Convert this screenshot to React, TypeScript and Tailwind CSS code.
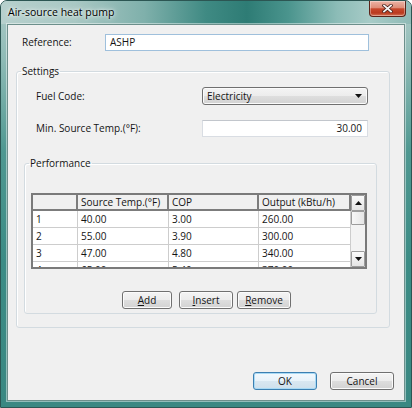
import React from "react";

const face =
  "h-[18px] items-center rounded-[3px] border border-[#707070] bg-[linear-gradient(180deg,#f4f4f4_0%,#ececec_50%,#dedede_50%,#d2d2d2_100%)] shadow-[inset_0_0_0_1px_#fbfbfb] leading-none";
const btn = `flex justify-center ${face}`;

function Up() {
  return (
    <svg width="7" height="4" viewBox="0 0 7 4">
      <path d="M0 4 L3.5 0 L7 4 Z" fill="#111" />
    </svg>
  );
}
function Down() {
  return (
    <svg width="7" height="4" viewBox="0 0 7 4">
      <path d="M0 0 L7 0 L3.5 4 Z" fill="#111" />
    </svg>
  );
}

const rows = [
  ["1", "40.00", "3.00", "260.00"],
  ["2", "55.00", "3.90", "300.00"],
  ["3", "47.00", "4.80", "340.00"],
  ["4", "65.00", "5.40", "370.00"],
];

export default function App() {
  return (
    <div className="h-[408px] w-[412px] font-['Open_Sans','Noto_Sans',sans-serif] text-[10px] text-[#141414]">
      <div className="flex h-full w-full flex-col overflow-hidden rounded-t-[7px] border border-[#2c5653] bg-[linear-gradient(180deg,#aecbc8_0px,#8dbab5_60px,#4f9891_150px,#3b8c85_260px,#3a8882_100%)]">
        {/* title bar */}
        <div className="flex h-[23px] shrink-0 items-start justify-between bg-[linear-gradient(90deg,#b7d0cd_0%,#a9c8c4_18%,#7fb0ab_35%,#3f8a83_50%,#2e7c75_60%,#4a948d_70%,#8cbcb7_82%,#a7cbc7_90%,#8fbab6_100%)]">
          <div className="pl-[7px] pt-[4px] text-[10.5px] leading-[15px] text-black [text-shadow:0_0_6px_rgba(255,255,255,0.95),0_0_3px_rgba(255,255,255,0.9)]">
            Air-source heat pump
          </div>
          <div className="mr-[5px] flex h-[16px] w-[37px] items-center justify-center rounded-b-[4px] border border-t-0 border-[#5b2319] bg-[linear-gradient(180deg,#ecb4a6_0%,#de8d78_45%,#c7482c_52%,#b93a1f_80%,#d67558_100%)] shadow-[inset_0_0_0_1px_rgba(255,255,255,0.35)]">
            <svg width="11" height="9" viewBox="0 0 11 9">
              <path d="M2 1.5 L9 7.5 M9 1.5 L2 7.5" stroke="#4a1f18" strokeWidth="3.4" strokeLinecap="square" />
              <path d="M2 1.5 L9 7.5 M9 1.5 L2 7.5" stroke="#f4f4f4" strokeWidth="1.8" strokeLinecap="square" />
            </svg>
          </div>
        </div>

        {/* body */}
        <div className="flex flex-1 px-[6px] pb-[6px]">
          <div className="flex flex-1 flex-col border border-[#6c8f8b] bg-[#f0f0f0] shadow-[0_0_0_1px_rgba(255,255,255,0.45)]">
            {/* Reference */}
            <div className="flex items-center pl-[14px] pt-[9px]">
              <span className="w-[83px]">Reference:</span>
              <div className="h-[17px] w-[264px] border border-[#9fc0dc] bg-white pl-[4px] leading-[15px]">
                ASHP
              </div>
            </div>

            {/* Settings */}
            <fieldset className="ml-[8px] mt-[13px] w-[374px] rounded-[3px] border border-[#d3dbe0] shadow-[inset_1px_1px_0_#fff]">
              <legend className="ml-[4px] px-[1px] leading-[14px]">Settings</legend>
              <div className="pb-[13px] pt-[9px]">
                <div className="flex items-center pl-[19px]">
                  <span className="w-[166px]">Fuel Code:</span>
                  <div className={`flex justify-between ${face} w-[166px] pl-[4px] pr-[5px]`}>
                    <span>Electricity</span>
                    <Down />
                  </div>
                </div>
                <div className="mt-[15px] flex items-center pl-[19px]">
                  <span className="w-[166px]">Min. Source Temp.(°F):</span>
                  <div className="h-[17px] w-[166px] border border-[#d9dde3] border-t-[#c2c6cc] bg-white pr-[5px] text-right leading-[15px]">
                    30.00
                  </div>
                </div>

                {/* Performance */}
                <fieldset className="ml-[7px] mt-[19px] w-[353px] rounded-[3px] border border-[#d3dbe0] shadow-[inset_1px_1px_0_#fff]">
                  <legend className="ml-[4px] px-[1px] leading-[14px]">Performance</legend>
                  <div className="pb-[4px] pl-[6px] pt-[23px]">
                    <div className="flex h-[76px] w-[336px] border-2 border-[#7a7a7a] bg-white">
                      <div className="grid h-[72px] w-[318px] grid-cols-[45px_91px_90px_92px] grid-rows-[16px_17px_17px_17px_17px] overflow-hidden">
                        <div className="border-b-2 border-r-2 border-[#7c7c7c] bg-[#f0f0f0]" />
                        {["Source Temp.(°F)", "COP", "Output (kBtu/h)"].map((h) => (
                          <div
                            key={h}
                            className="border-b-2 border-r-2 border-[#7c7c7c] bg-[#f0f0f0] pl-[3px] leading-[14px]"
                          >
                            {h}
                          </div>
                        ))}
                        {rows.map((r) =>
                          r.map((c, i) => (
                            <div
                              key={r[0] + "-" + i}
                              className="border-b border-r border-[#cdcdcd] bg-white pl-[3px] leading-[16px]"
                            >
                              {c}
                            </div>
                          ))
                        )}
                      </div>
                      {/* scrollbar */}
                      <div className="flex w-[14px] flex-col bg-[#f3f3f3]">
                        <div className="flex h-[16px] items-center justify-center rounded-[1px] border border-[#9c9c9c] bg-[linear-gradient(180deg,#fafafa,#e4e4e4)]">
                          <Up />
                        </div>
                        <div className="h-[14px] rounded-[1px] border border-[#9c9c9c] bg-[linear-gradient(90deg,#f7f7f7,#e6e6e6)]" />
                        <div className="flex-1" />
                        <div className="flex h-[16px] items-center justify-center rounded-[1px] border border-[#9c9c9c] bg-[linear-gradient(180deg,#fafafa,#e4e4e4)]">
                          <Down />
                        </div>
                      </div>
                    </div>

                    <div className="mt-[22px] flex pl-[91px]">
                      <div className={`${btn} w-[50px]`}>
                        <span>
                          <u>A</u>dd
                        </span>
                      </div>
                      <div className={`${btn} ml-[7px] w-[54px]`}>
                        <span>
                          <u>I</u>nsert
                        </span>
                      </div>
                      <div className={`${btn} ml-[4px] w-[54px]`}>
                        <span>
                          <u>R</u>emove
                        </span>
                      </div>
                    </div>
                  </div>
                </fieldset>
              </div>
            </fieldset>

            {/* OK / Cancel */}
            <div className="mt-auto flex justify-end gap-[13px] pb-[10px] pr-[10px]">
              <div className="flex h-[18px] w-[64px] items-center justify-center rounded-[3px] border border-[#3c7fb1] bg-[linear-gradient(180deg,#f3f9fd_0%,#e8f2f9_50%,#d9e7f1_50%,#cfe0ec_100%)] shadow-[inset_0_0_0_1px_#a9daf5] leading-none">
                OK
              </div>
              <div className={`${btn} w-[64px]`}>Cancel</div>
            </div>
          </div>
        </div>
      </div>
    </div>
  );
}
